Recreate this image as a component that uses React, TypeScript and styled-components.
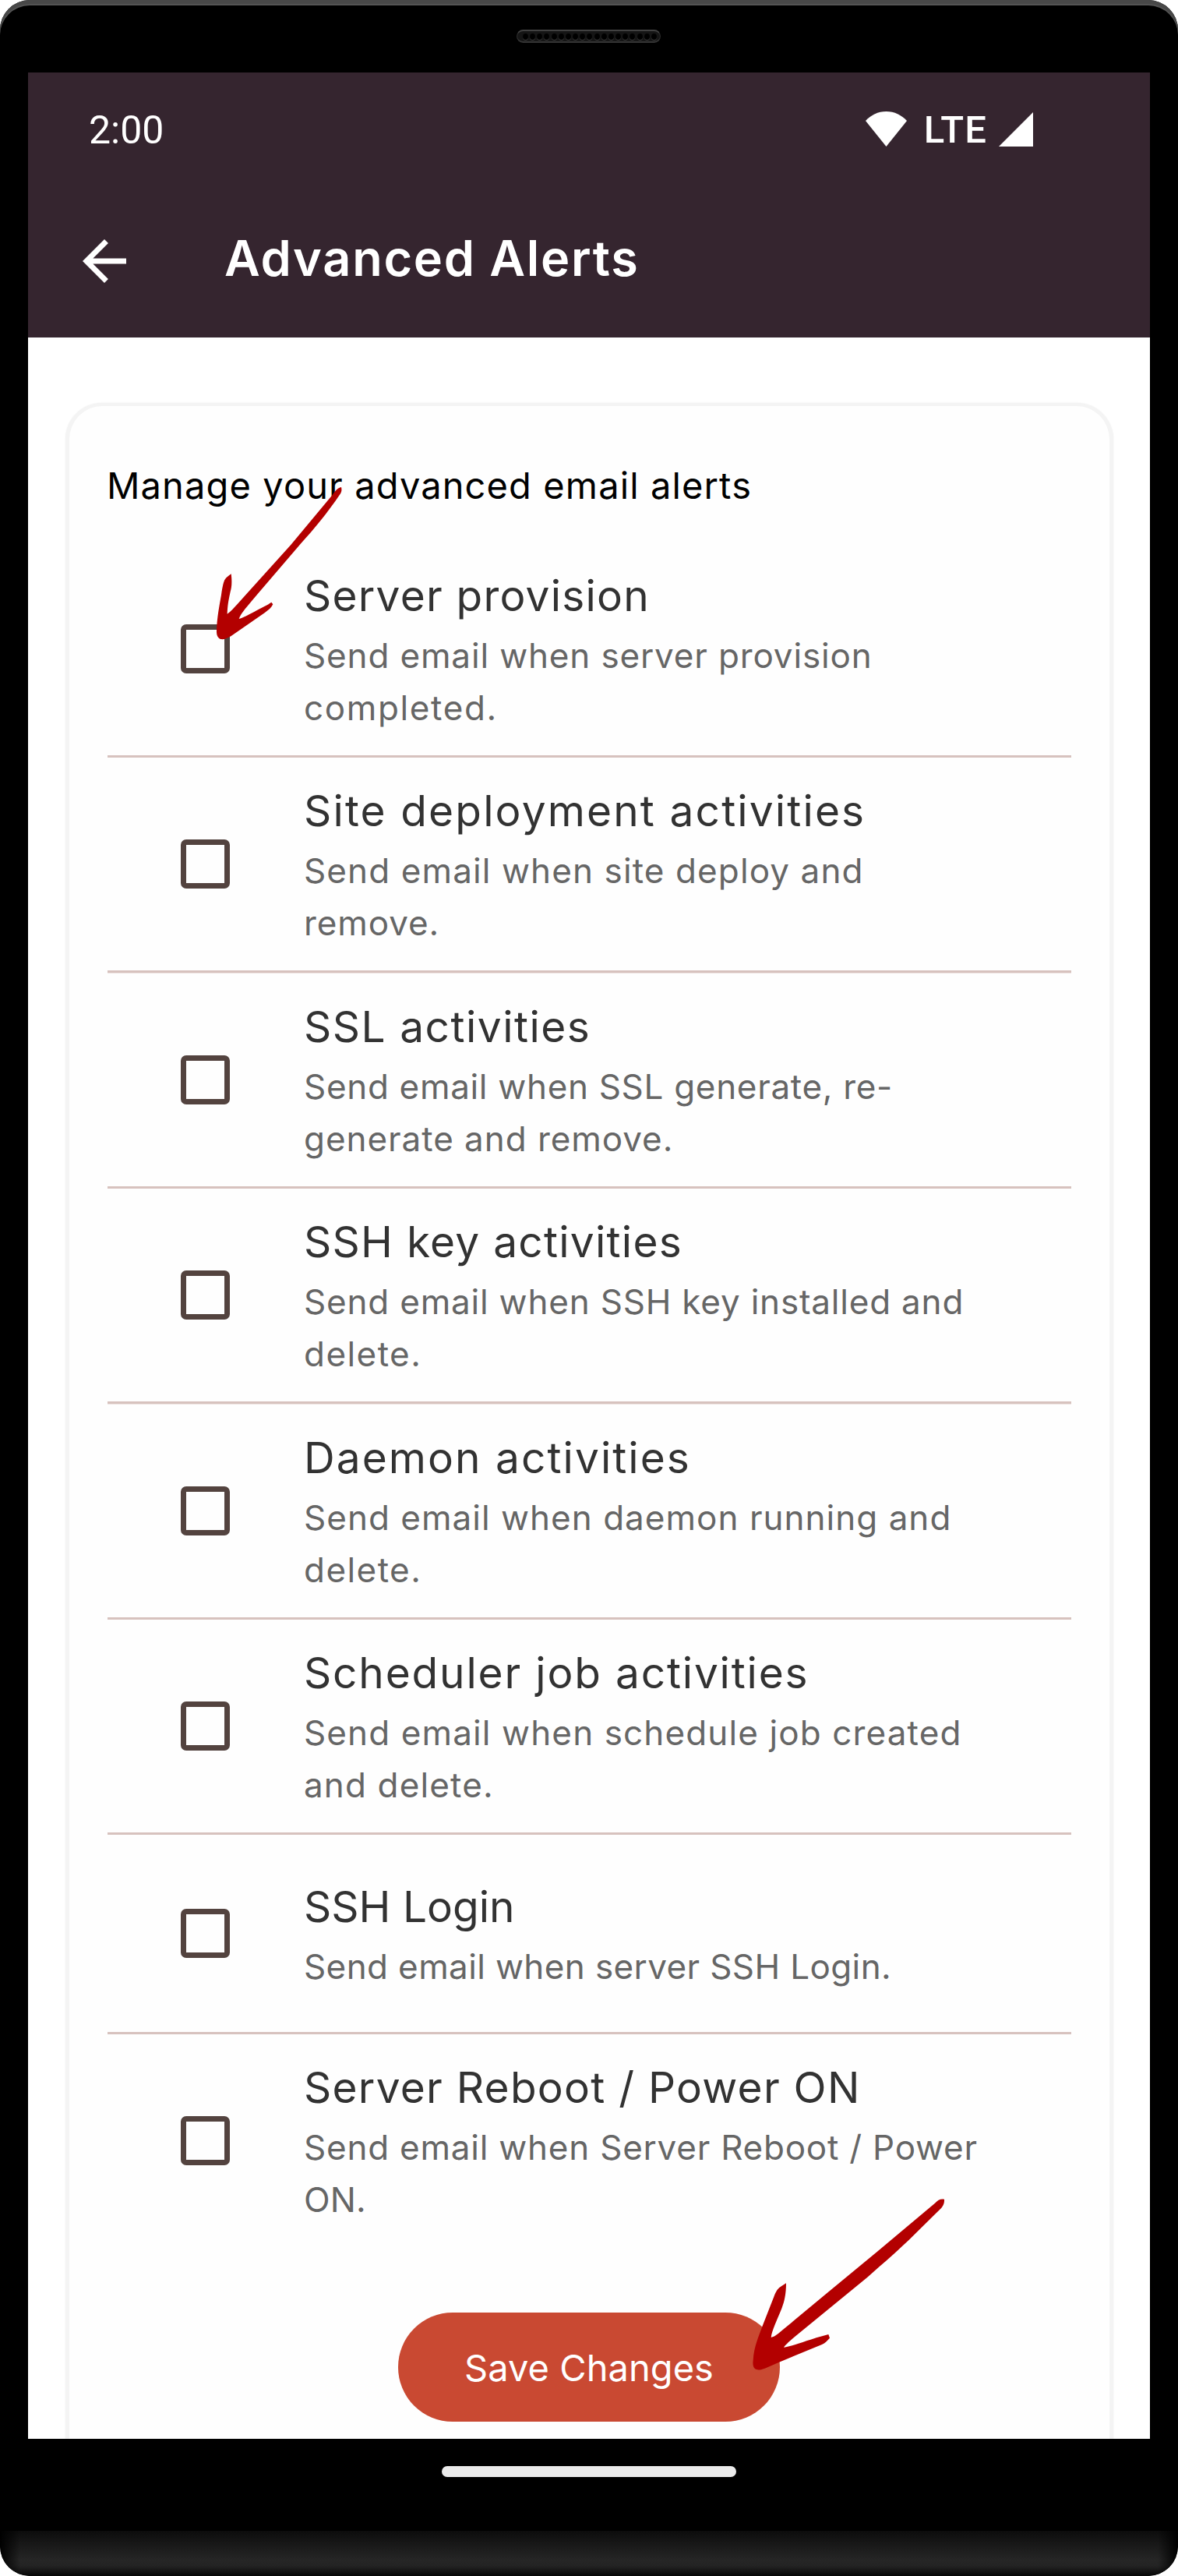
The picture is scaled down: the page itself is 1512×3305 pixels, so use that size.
import React, { useState } from "react";
import styled, { createGlobalStyle } from "styled-components";

const GlobalStyle = createGlobalStyle`
  *, *::before, *::after { box-sizing: border-box; }
  body {
    margin: 0;
    background: #fff;
    font-family: Inter, "Liberation Sans", sans-serif;
  }
`;

const Phone = styled.div`
  position: relative;
  display: flex;
  flex-direction: column;
  width: 1512px;
  height: 3305px;
  overflow: hidden;
  background: #000;
  border-radius: 38px;
`;

const TopBezel = styled.header`
  display: flex;
  justify-content: center;
  align-items: flex-start;
  height: 93px;
  flex: none;
  padding: 38px 1px 0 0;
  border-radius: 38px 38px 0 0;
  box-shadow: inset 0 5px 0 #484848, inset 0 7px 0 #545454;
`;

const Speaker = styled.div`
  display: flex;
  justify-content: space-between;
  align-items: center;
  width: 185px;
  height: 17px;
  padding: 1px 4px 0 7px;
  border: 1px solid #2c2c2c;
  border-top: 2px solid #414141;
  border-bottom: 2px solid #343434;
  border-radius: 9px;
  background: #151515;
`;

const Hole = styled.i`
  width: 7px;
  height: 8px;
  border-radius: 50%;
  background: #000;
  box-shadow: 0 1px 0 #3c3c3c;
`;

const Screen = styled.main`
  display: flex;
  flex-direction: column;
  height: 3036px;
  flex: none;
  margin: 0 36px;
  overflow: hidden;
  background: #fff;
`;

const StatusBar = styled.div`
  display: flex;
  justify-content: space-between;
  align-items: center;
  height: 148px;
  flex: none;
  padding: 0 150px 0 78px;
  background: #35252f;
  color: #fff;
  font-family: Roboto, sans-serif;
`;

const Clock = styled.span`
  font-size: 50px;
  letter-spacing: 0px;
`;

const StatusIcons = styled.div`
  display: flex;
  align-items: center;

  svg {
    display: block;
    margin-bottom: 3px;
  }
`;

const Network = styled.span`
  margin: 0 15px 1px 22px;
  font-size: 49px;
  font-weight: 500;
  letter-spacing: 1.07px;
`;

const AppBar = styled.div`
  display: flex;
  align-items: center;
  gap: 112px;
  height: 192px;
  flex: none;
  padding: 0 56px 4px;
  background: #35252f;
  color: #fff;
`;

const BackButton = styled.button`
  width: 84px;
  height: 84px;
  padding: 0;
  border: 0;
  background: none;
  color: inherit;

  svg { display: block; }
`;

const PageTitle = styled.h1`
  margin: 0;
  padding-bottom: 8px;
  font-size: 63px;
  font-weight: 600;
  line-height: 80px;
  letter-spacing: 1.7px;
  white-space: nowrap;
`;

const Card = styled.section`
  flex: none;
  height: 2800px;
  margin: 84px 47px 0 48px;
  padding: 71px 49px 0;
  border: 4px solid #f4f4f4;
  border-width: 4px 5px;
  border-radius: 47px;
  background: #fefefe;
  box-shadow: 0 0 2px rgba(0, 0, 0, 0.08);
`;

const Intro = styled.p`
  margin: 1px 0 43px -1px;
  color: #000;
  font-size: 47px;
  line-height: 60px;
  letter-spacing: 1.12px;
  white-space: nowrap;
`;

const Row = styled.label<{ $short?: boolean }>`
  display: flex;
  align-items: center;
  gap: 95px;
  height: ${(p) => (p.$short ? 252.6 : 273)}px;
  padding-left: 94px;
`;

const Divider = styled.hr`
  height: 3.4px;
  margin: 0;
  border: 0;
  border-top: 3px solid #d7c2be;
  background: #eee4e2;
`;

const Checkbox = styled.input`
  appearance: none;
  flex: none;
  width: 63px;
  height: 63px;
  margin: 0;
  border: 7px solid #53433f;
  border-radius: 7px;
  background: transparent;

  &:checked { background: #53433f; }
`;

const RowText = styled.span`
  display: flex;
  flex-direction: column;
  padding-bottom: 2px;
  white-space: nowrap;
`;

const RowTitle = styled.span<{ $tracking: number }>`
  color: #323232;
  font-size: 55px;
  line-height: 87px;
  letter-spacing: ${(p) => p.$tracking}px;
`;

const RowLine = styled.span<{ $tracking: number }>`
  color: #666;
  font-size: 44px;
  line-height: 67px;
  letter-spacing: ${(p) => p.$tracking}px;
`;

const SaveButton = styled.button`
  display: block;
  width: 490px;
  height: 140px;
  margin: 84px auto 0 373px;
  padding: 0;
  border: 0;
  border-radius: 70px;
  background: #c94932;
  color: #fff;
  font-family: inherit;
  font-size: 47px;
  letter-spacing: 0.05px;
`;

const BottomBezel = styled.footer`
  display: flex;
  flex: 1;
  flex-direction: column;
  align-items: center;
  justify-content: space-between;
  padding-top: 35px;
`;

const HomePill = styled.div`
  width: 378px;
  height: 14px;
  border-radius: 7px;
  background: #ebebeb;
`;

const Chin = styled.div`
  width: 100%;
  height: 58px;
  border-radius: 0 0 38px 38px;
  background:
    linear-gradient(90deg, #000, transparent 26px, transparent 1486px, #000),
    linear-gradient(#0c0c0c, #262626 65%, #232323 78%, #050505);
`;

const ArrowMark = styled.svg<{ $x: number; $y: number }>`
  position: absolute;
  left: ${(p) => p.$x}px;
  top: ${(p) => p.$y}px;
  fill: #b30000;
  pointer-events: none;
`;

type Line = [text: string, tracking: number];

interface Alert {
  title: Line;
  lines: Line[];
}

const alerts: Alert[] = [
  {
    title: ["Server provision", 1.22],
    lines: [["Send email when server provision", 0.85], ["completed.", 1.63]],
  },
  {
    title: ["Site deployment activities", 2.14],
    lines: [["Send email when site deploy and", 1.11], ["remove.", 0.9]],
  },
  {
    title: ["SSL activities", 1.5],
    lines: [["Send email when SSL generate, re-", 0.68], ["generate and remove.", 0.95]],
  },
  {
    title: ["SSH key activities", 1.25],
    lines: [["Send email when SSH key installed and", 0.8], ["delete.", 1.45]],
  },
  {
    title: ["Daemon activities", 2.05],
    lines: [["Send email when daemon running and", 1.02], ["delete.", 1.45]],
  },
  {
    title: ["Scheduler job activities", 1.82],
    lines: [["Send email when schedule job created", 1.12], ["and delete.", 1.15]],
  },
  {
    title: ["SSH Login", 0],
    lines: [["Send email when server SSH Login.", 0.38]],
  },
  {
    title: ["Server Reboot / Power ON", 1.25],
    lines: [["Send email when Server Reboot / Power", 0.77], ["ON.", 0.1]],
  },
];

const holes = Array.from({ length: 19 }, (_, i) => i);

export default function App() {
  const [enabled, setEnabled] = useState<boolean[]>(alerts.map(() => false));
  const toggle = (index: number) =>
    setEnabled((prev) => prev.map((on, i) => (i === index ? !on : on)));

  return (
    <>
      <GlobalStyle />
      <Phone>
        <TopBezel>
          <Speaker>
            {holes.map((i) => (
              <Hole key={i} />
            ))}
          </Speaker>
        </TopBezel>

        <Screen>
          <StatusBar>
            <Clock>2:00</Clock>
            <StatusIcons>
              <svg width="53" height="45" viewBox="0 0 53 45" fill="#fff">
                <path d="M26.5 45 0 12C7 4.500 16 0 26.500 0S46 4.500 53 12Z" />
              </svg>
              <Network>LTE</Network>
              <svg width="44" height="44" viewBox="0 0 44 44" fill="#fff">
                <path d="M0 44 44 0V44Z" />
              </svg>
            </StatusIcons>
          </StatusBar>

          <AppBar>
            <BackButton aria-label="Back">
              <svg width="84" height="84" viewBox="0 0 24 24" fill="currentColor">
                <path d="M20 11H7.830l5.590-5.590L12 4l-8 8 8 8 1.410-1.410L7.830 13H20v-2z" />
              </svg>
            </BackButton>
            <PageTitle>Advanced Alerts</PageTitle>
          </AppBar>

          <Card>
            <Intro>Manage your advanced email alerts</Intro>
            {alerts.map(({ title, lines }, i) => (
              <React.Fragment key={title[0]}>
                {i > 0 && <Divider />}
                <Row $short={lines.length === 1}>
                  <Checkbox type="checkbox" checked={enabled[i]} onChange={() => toggle(i)} />
                  <RowText>
                    <RowTitle $tracking={title[1]}>{title[0]}</RowTitle>
                    {lines.map(([text, tracking]) => (
                      <RowLine key={text} $tracking={tracking}>
                        {text}
                      </RowLine>
                    ))}
                  </RowText>
                </Row>
              </React.Fragment>
            ))}
            <SaveButton>Save Changes</SaveButton>
          </Card>
        </Screen>

        <BottomBezel>
          <HomePill />
          <Chin />
        </BottomBezel>

        <ArrowMark $x={240} $y={600} width="240" height="300" viewBox="0 0 720 900">
          <path d="M594 75C597 86 595 95 588 104C540 175 490 235 440 290L250 512C222 545 207 563 200 582C215 578 232 568 260 554C290 537 310 529 325 518L331 526C325 540 315 547 300 558L170 648C155 658 140 662 130 660C118 656 114 645 114 630C115 580 125 530 132 490C138 450 141 441 145 432C152 421 160 417 170 409C174 440 172 460 167 478C160 510 156 530 155 563C170 553 180 540 195 524L400 297L560 105C570 90 580 78 594 75Z" />
        </ArrowMark>
        <ArrowMark $x={900} $y={2780} width="400" height="340" viewBox="0 0 1200 1020">
          <path d="M936 125C937 140 933 149 925 158L820 262C770 312 700 373 640 425L365 650C340 671 325 685 318 695C360 690 400 668 490 645L495 659C485 670 478 678 465 684L300 752L245 776C225 783 215 783 208 778C200 770 198 762 200 745C203 690 223 650 235 615L280 500C288 480 293 473 300 466C308 459 318 455 327 448C327 490 320 520 310 545C290 595 272 630 269 657C280 655 290 648 310 631L480 490L680 325L900 140C912 127 922 122 936 125Z" />
        </ArrowMark>
      </Phone>
    </>
  );
}
